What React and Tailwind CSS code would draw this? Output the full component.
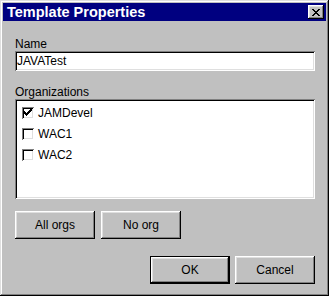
import React from "react";

const raised =
  "shadow-[inset_-1px_-1px_0_#000,inset_1px_1px_0_#fff,inset_-2px_-2px_0_#808080,inset_2px_2px_0_#dfdfdf]";
const sunken =
  "shadow-[inset_1px_1px_0_#808080,inset_-1px_-1px_0_#fff,inset_2px_2px_0_#000,inset_-2px_-2px_0_#dfdfdf]";

function Btn({ children, def }) {
  if (def) {
    return (
      <div className="w-[80px] h-[28px] border border-black">
        <div className={`w-full h-full flex items-center justify-center text-[12px] text-black ${raised}`}>
          {children}
        </div>
      </div>
    );
  }
  return (
    <div className={`w-[80px] h-[28px] flex items-center justify-center text-[12px] text-black ${raised}`}>
      {children}
    </div>
  );
}

function Check({ checked, label }) {
  return (
    <div className="h-[21px] flex items-center">
      <div className={`w-[12px] h-[12px] bg-white ${sunken} flex items-center justify-center`}>
        {checked && (
          <svg width="8" height="8" viewBox="0 0 8 8" shapeRendering="crispEdges">
            <path d="M0 2h1v3h-1zM1 3h1v3h-1zM2 4h1v3h-1zM3 3h1v3h-1zM4 2h1v3h-1zM5 1h1v3h-1zM6 0h1v3h-1zM7 0h1v2h-1z" fill="#000" />
          </svg>
        )}
      </div>
      <span className="ml-[4px] text-[12px] text-black leading-[14px]">{label}</span>
    </div>
  );
}

export default function App() {
  return (
    <div
      className={`w-[329px] h-[296px] bg-[#c0c0c0] p-[3px] flex flex-col shadow-[inset_-1px_-1px_0_#000,inset_1px_1px_0_#dfdfdf,inset_-2px_-2px_0_#808080,inset_2px_2px_0_#fff]`}
      style={{ fontFamily: '"Liberation Sans", Arial, sans-serif' }}
    >
      <div className="h-[18px] bg-[#000080] flex items-center justify-between pl-[4px] pr-[2px]">
        <span className="text-white font-bold text-[14.5px] leading-[18px]">Template Properties</span>
        <div className={`w-[16px] h-[14px] bg-[#c0c0c0] flex items-center justify-center ${raised}`}>
          <svg width="8" height="7" viewBox="0 0 8 7" shapeRendering="crispEdges">
            <path
              d="M0 0h2v1h-2zM6 0h2v1h-2zM1 1h2v1h-2zM5 1h2v1h-2zM2 2h4v1h-4zM3 3h2v1h-2zM2 4h4v1h-4zM1 5h2v1h-2zM5 5h2v1h-2zM0 6h2v1h-2zM6 6h2v1h-2z"
              fill="#000"
            />
          </svg>
        </div>
      </div>
      <div className="pl-[12px] pr-[11px] pt-[16px] flex flex-col">
        <div className="text-[12px] leading-[14px] text-black">Name</div>
        <div className={`h-[20px] bg-white ${sunken} flex items-center pl-[2px] text-[12px] text-black`}>
          JAVATest
        </div>
        <div className="mt-[14px] text-[12px] leading-[14px] text-black">Organizations</div>
        <div className={`h-[100px] bg-white ${sunken} pl-[7px] pt-[3px] flex flex-col`}>
          <Check checked label="JAMDevel" />
          <Check label="WAC1" />
          <Check label="WAC2" />
        </div>
        <div className="mt-[12px] flex gap-[6px]">
          <Btn>All orgs</Btn>
          <Btn>No org</Btn>
        </div>
        <div className="mt-[17px] flex justify-end gap-[5px]">
          <Btn def>OK</Btn>
          <Btn>Cancel</Btn>
        </div>
      </div>
    </div>
  );
}
